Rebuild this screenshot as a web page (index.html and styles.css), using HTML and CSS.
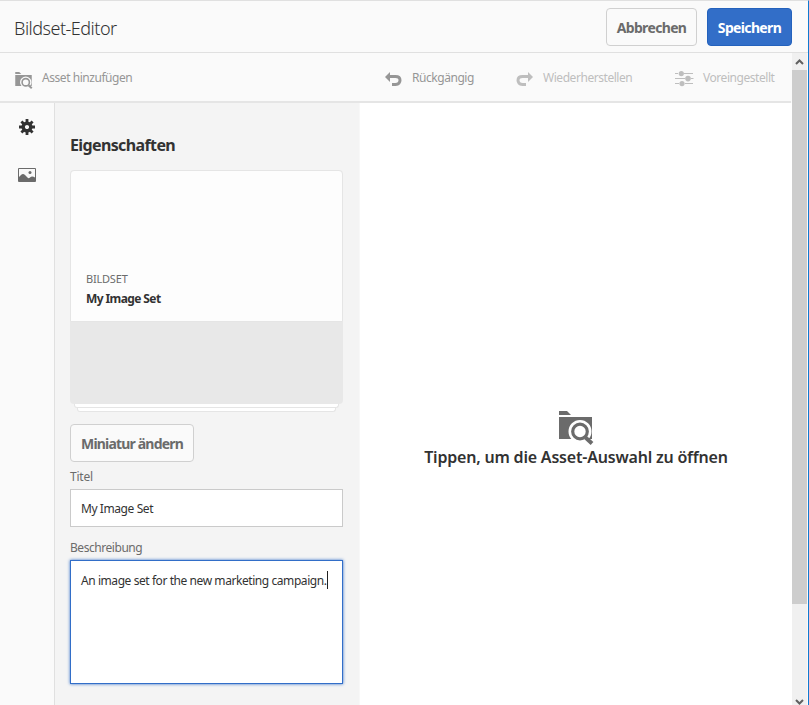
FILE: index.html
```html
<!DOCTYPE html>
<html lang="de">
<head>
<meta charset="utf-8">
<title>Bildset-Editor</title>
<link rel="stylesheet" href="styles.css">
</head>
<body>
<svg class="defs" width="0" height="0">
  <symbol id="folder-search" viewBox="0 0 35 34">
    <path d="M0 0H8L12 4H0ZM0 6H33V28H0Z"/>
    <g fill="none"><circle class="halo" cx="21" cy="20.500" r="8.500" stroke-width="6"/><path d="M26.500 26.500L33 32.500" stroke="currentColor" stroke-width="4"/><circle class="hole" cx="21" cy="20.500" r="7.300" stroke="currentColor" stroke-width="3.200"/></g>
  </symbol>
</svg>
<div class="app">
  <header class="header">
    <h1 class="title"><span>Bildset-Editor</span></h1>
    <button class="btn cancel"><span>Abbrechen</span></button>
    <button class="btn primary"><span>Speichern</span></button>
  </header>
  <div class="view">
    <div class="content">
      <nav class="toolbar">
        <div class="tool add"><svg width="18" height="17"><use href="#folder-search"/></svg><span>Asset hinzufügen</span></div>
        <div class="tool undo"><svg width="17" height="14" viewBox="0 0 17 14"><path d="M0 5L5 0V10Z"/><path d="M4 4.500H10.500Q15 4.500 15 8.200T10.500 12.500H7" fill="none" stroke="currentColor" stroke-width="3"/></svg><span>Rückgängig</span></div>
        <div class="tool redo off"><svg width="17" height="14" viewBox="0 0 17 14"><path d="M17 5L12 0V10Z"/><path d="M13 4.500H6.500Q2 4.500 2 8.200T6.500 12.500H10" fill="none" stroke="currentColor" stroke-width="3"/></svg><span>Wiederherstellen</span></div>
        <div class="tool preset off"><svg width="19" height="16" viewBox="0 0 19 16"><path d="M0 2H3V3H0ZM9 2H18V3H9ZM0 7H10V8H0ZM16 7H18.500V8H16ZM0 12H4V13H0ZM10 12H18V13H10Z"/><circle cx="6.300" cy="2.600" r="2.600"/><circle cx="13" cy="7.600" r="2.800"/><circle cx="7" cy="12.600" r="2.600"/></svg><span>Voreingestellt</span></div>
      </nav>
      <main class="main">
        <aside class="rail">
          <svg class="gear" width="16" height="16" viewBox="-8 -8 16 16"><g stroke="currentColor" stroke-width="2.800"><path d="M0-8V-4M0 8V4M-8 0H-4M8 0H4M-5.600-5.600L-3-3M5.600 5.600L3 3M-5.600 5.600L-3 3M5.600-5.600L3-3"/><circle r="3.800" fill="none" stroke-width="3.400"/></g></svg>
          <svg class="image" width="18" height="14" viewBox="0 0 18 14"><path d="M.5.500H17.500V13.500H.5Z" fill="none" stroke="currentColor"/><path d="M1 9L3 7Q5 5 7 7L10 10Q11 10.500 12 9.500Q14 7.500 17 9.500V13H1Z"/><circle cx="12" cy="4.500" r="1.500"/></svg>
        </aside>
        <section class="panel">
          <h2><span>Eigenschaften</span></h2>
          <div class="card">
            <div class="card-info"><div class="kind"><span>BILDSET</span></div><div class="name"><span>My Image Set</span></div></div>
            <div class="card-thumb"></div>
          </div>
          <div class="sheet one"></div>
          <div class="sheet two"></div>
          <button class="btn change"><span>Miniatur ändern</span></button>
          <div class="label label-title"><span>Titel</span></div>
          <div class="field"><span>My Image Set</span></div>
          <div class="label label-desc"><span>Beschreibung</span></div>
          <div class="field area"><span>An image set for the new marketing campaign.</span><i class="caret"></i></div>
        </section>
        <section class="canvas">
          <svg width="35" height="34"><use href="#folder-search"/></svg>
          <p><span>Tippen, um die Asset-Auswahl zu öffnen</span></p>
        </section>
      </main>
    </div>
    <div class="scrollbar">
      <svg width="9" height="6" viewBox="0 0 9 6"><path d="M1 5L4.500 1.500L8 5" fill="none" stroke="currentColor" stroke-width="2"/></svg>
      <div class="thumb"></div>
      <svg width="9" height="6" viewBox="0 0 9 6"><path d="M1 1L4.500 4.500L8 1" fill="none" stroke="currentColor" stroke-width="2"/></svg>
    </div>
  </div>
</div>
</body>
</html>
```
FILE: styles.css
```css
* { box-sizing: border-box; }
body { margin: 0; overflow: hidden; font: 12px/18px "Noto Sans", "Open Sans", sans-serif; color: #323232; }
svg { display: block; fill: currentColor; flex: none; overflow: visible; }
.defs { position: absolute; }
span { white-space: nowrap; }
.app { width: 809px; height: 705px; border-top: 1px solid #e0e0e0; border-right: 1px solid #0f7ad1; background: #fafafa; display: flex; flex-direction: column; --bg: #fafafa; }
.header { height: 52px; flex: none; display: flex; align-items: center; padding: 0 16px 0 14px; border-bottom: 1px solid #e0e0e0; }
.title { margin: 0 auto 0 0; font-size: 18px; line-height: 26px; font-weight: 300; letter-spacing: -.5px; padding-top: 3px; }
.btn { height: 38px; padding: 2px 0 0; border: 1px solid #d0d0d0; border-radius: 4px; background: #fafafa; color: #6b6b6b; font: bold 14px/20px "Noto Sans", sans-serif; letter-spacing: -.65px; text-align: center; }
.cancel { width: 91px; }
.primary { width: 85px; margin-left: 10px; background: #326ec8; border-color: #2462bd; color: #fff; }
.view { flex: 1; display: flex; min-height: 0; }
.content { width: 792px; display: flex; flex-direction: column; }
.toolbar { height: 50px; flex: none; border-bottom: 2px solid #e5e5e5; display: flex; margin-right: 1px; padding-left: 15px; color: #969696; }
.tool { display: flex; padding-top: 16px; letter-spacing: -.45px; }
.tool svg { margin-top: 2px; }
.tool.add svg { margin-top: 3px; }
.add { width: 370px; gap: 9px; }
.undo { width: 131px; gap: 10px; }
.undo svg, .redo svg { margin-top: 3px; }
.redo { width: 159px; gap: 10px; }
.preset { gap: 9px; }
.off { color: #bebebe; }
.halo { stroke: var(--bg); }
.hole { fill: var(--bg); }
.main { flex: 1; display: flex; min-height: 0; }
.rail { width: 55px; flex: none; border-right: 1px solid #e0e0e0; padding: 16px 0 0 18px; }
.gear { margin-left: 1px; }
.image { margin-top: 33px; color: #6b6b6b; }
.panel { width: 305px; flex: none; background: #f4f4f4; border-right: 1px solid #f8f8f8; padding: 30px 16px 0 15px; }
h2 { margin: 0; height: 37px; font-size: 16px; line-height: 24px; letter-spacing: -.62px; }
.card { height: 234px; border-radius: 4px; background: #e8e8e8; overflow: hidden; }
.card-info { height: 152px; background: #fdfdfd; border: 1px solid #e5e5e5; border-radius: 4px 4px 0 0; padding: 99px 15px 0; }
.kind { color: #6b6b6b; font-size: 11px; letter-spacing: -.2px; }
.name { margin-top: 2px; font-weight: bold; letter-spacing: -.6px; }
.sheet { height: 4px; background: #fff; border: 1px solid #e5e5e5; border-top: 0; border-radius: 0 0 3px 3px; margin: 0 4px; }
.two { margin: 0 7px; }
.change { display: block; width: 124px; margin-top: 12px; letter-spacing: -.82px; }
.label { color: #6b6b6b; letter-spacing: -.45px; }
.label-title { margin-top: 6px; height: 21px; letter-spacing: -.2px; }
.label-desc { margin-top: 12px; height: 21px; }
.field { height: 38px; border: 1px solid #cacaca; background: #fff; padding: 10px; display: flex; letter-spacing: -.42px; }
.area { height: 124px; border-color: #326ec8; box-shadow: 0 0 3px #326ec8; letter-spacing: -.43px; }
.area span { padding-top: 1px; }
.caret { width: 1px; height: 18px; background: #222; }
.canvas { flex: 1; background: #fff; display: flex; flex-direction: column; align-items: center; padding-top: 308px; --bg: #fff; }
.canvas svg { color: #6b6b6b; }
.canvas p { margin: 0; font-size: 16px; line-height: 24px; font-weight: 600; letter-spacing: -.2px; }
.scrollbar { width: 15px; background: #f0f0f0; display: flex; flex-direction: column; align-items: center; padding: 6px 0 0; color: #606060; }
.thumb { width: 15px; height: 534px; margin: 5px 0 95px; background: #cdcdcd; flex: none; }
```
